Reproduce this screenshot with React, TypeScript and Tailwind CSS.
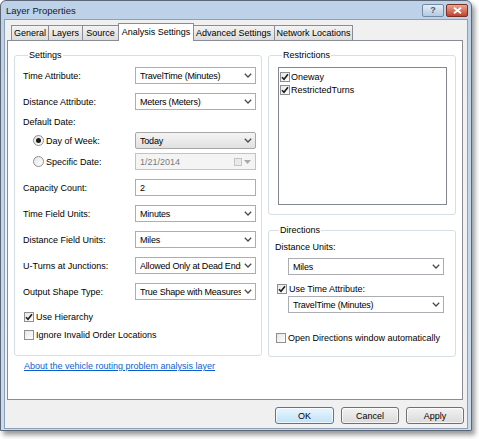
import React from 'react'

const font = "font-['Liberation_Sans',Arial,sans-serif]"

function Chevron({ color = '#4a4a4a' }: { color?: string }) {
  return (
    <svg width="8" height="5" viewBox="0 0 8 5" className="shrink-0">
      <path d="M0.8 0.8 L4 4 L7.2 0.8" fill="none" stroke={color} strokeWidth="1.3" />
    </svg>
  )
}

function Combo({ value, className = '', gray = false }: { value: string; className?: string; gray?: boolean }) {
  return (
    <div
      className={`flex h-[17px] items-center overflow-hidden border ${
        gray
          ? 'rounded-[2px] border-[#a7a7a7] bg-gradient-to-b from-[#f4f4f4] to-[#e1e1e1]'
          : 'border-[#abadb3] bg-white'
      } ${className}`}
    >
      <span className="flex-1 overflow-hidden whitespace-nowrap pl-[4px] tracking-[-0.2px] text-black">{value}</span>
      <span className="flex w-[14px] shrink-0 justify-center">
        <Chevron />
      </span>
    </div>
  )
}

function Check({ checked }: { checked?: boolean }) {
  return (
    <span className="flex h-[10px] w-[10px] shrink-0 items-center justify-center border border-[#8e8f8f] bg-gradient-to-br from-[#e6e6e6] to-white">
      {checked && (
        <svg width="8" height="8" viewBox="0 0 8 8">
          <path d="M1 4.2 L3 6.3 L7 1.2" fill="none" stroke="#1d1d1d" strokeWidth="1.6" />
        </svg>
      )}
    </span>
  )
}

function Radio({ checked }: { checked?: boolean }) {
  return (
    <span className="flex h-[11px] w-[11px] shrink-0 items-center justify-center rounded-full border border-[#8e8f8f] bg-gradient-to-br from-[#e4e4e4] to-white">
      {checked && <span className="h-[5px] w-[5px] rounded-full bg-[#1a1a1a]" />}
    </span>
  )
}

function Row({ label, children, mt = 'mt-[9px]' }: { label: React.ReactNode; children: React.ReactNode; mt?: string }) {
  return (
    <div className={`flex h-[17px] items-center ${mt}`}>
      <div className="w-[112px] shrink-0">{label}</div>
      {children}
    </div>
  )
}

const tabs = [
  { name: 'General', w: 'w-[38px]' },
  { name: 'Layers', w: 'w-[34px]' },
  { name: 'Source', w: 'w-[36px]' },
  { name: 'Analysis Settings', w: 'w-[76px]', active: true },
  { name: 'Advanced Settings', w: 'w-[82px]' },
  { name: 'Network Locations', w: 'w-[78px]' },
]

export default function App() {
  return (
    <div className={`h-[439px] w-[479px] bg-white text-[9px] leading-[12px] text-black ${font}`}>
      <div className="flex h-[431px] w-[472px] flex-col rounded-t-[6px] border border-[#5b6777] bg-gradient-to-b from-[#bdd1e9] to-[#cadbee] shadow-[3px_4px_5px_rgba(0,0,0,0.4)]">
        {/* Title bar */}
        <div className="flex h-[18px] items-start justify-between pl-[5px] pr-[3px] pt-[3px]">
          <span className="mt-[1px] text-[9.5px] text-[#1b1b1b]">Layer Properties</span>
          <div className="flex gap-[2px]">
            <div className="flex h-[13px] w-[22px] items-center justify-center rounded-[2px] border border-[#7489a4] bg-gradient-to-b from-[#e4edf7] to-[#b4c9e3] text-[9px] font-bold leading-none text-[#4b5b70]">
              ?
            </div>
            <div className="flex h-[13px] w-[22px] items-center justify-center rounded-[2px] border border-[#7d2f22] bg-gradient-to-b from-[#e9a593] to-[#c2402a]">
              <svg width="9" height="7" viewBox="0 0 9 7">
                <path d="M1 0.8 L8 6.2 M8 0.8 L1 6.2" stroke="white" strokeWidth="1.8" />
              </svg>
            </div>
          </div>
        </div>

        {/* Client area */}
        <div className="mx-[3px] mb-[1px] flex flex-1 flex-col border border-[#8ea0b7] bg-[#f0f0f0]">
          {/* Tabs */}
          <div className="ml-[6px] mt-[3px] flex h-[17px] items-end">
            {tabs.map((t) =>
              t.active ? (
                <div
                  key={t.name}
                  className={`relative z-10 -mb-[1px] -mx-[1px] flex h-[18px] items-start justify-center border border-b-0 border-[#898c95] bg-white pt-[2px] ${t.w}`}
                >
                  {t.name}
                </div>
              ) : (
                <div
                  key={t.name}
                  className={`flex h-[15px] items-center justify-center border border-b-0 border-l-0 border-[#898c95] bg-gradient-to-b from-[#f3f3f3] to-[#dcdcdc] first:border-l ${t.w}`}
                >
                  {t.name}
                </div>
              ),
            )}
          </div>

          {/* Tab panel */}
          <div className="ml-[2px] flex h-[360px] w-[456px] flex-col border border-[#898c95] bg-white">
            <div className="mt-[8px] flex">
              {/* Settings */}
              <fieldset className="ml-[6px] h-[307px] w-[248px] rounded-[3px] border border-[#d5dfe5] pl-[8px] pr-[5px]">
                <legend className="ml-[5px] px-[1px] leading-[12px]">Settings</legend>
                <Row label="Time Attribute:" mt="mt-[6px]">
                  <Combo value="TravelTime (Minutes)" className="w-[121px]" />
                </Row>
                <Row label="Distance Attribute:">
                  <Combo value="Meters (Meters)" className="w-[121px]" />
                </Row>
                <div className="mt-[5px] flex h-[14px] items-center">Default Date:</div>
                <Row
                  mt="mt-[3px]"
                  label={
                    <span className="flex items-center gap-[2px] pl-[10px]">
                      <Radio checked />
                      Day of Week:
                    </span>
                  }
                >
                  <Combo value="Today" gray className="w-[121px]" />
                </Row>
                <Row
                  mt="mt-[4px]"
                  label={
                    <span className="flex items-center gap-[2px] pl-[10px]">
                      <Radio />
                      Specific Date:
                    </span>
                  }
                >
                  <div className="flex h-[17px] w-[121px] items-center border border-[#c0c4c8] bg-[#f4f4f4] text-[#7a7a7a]">
                    <span className="flex-1 pl-[4px]">1/21/2014</span>
                    <span className="mr-[2px] h-[8px] w-[8px] border border-[#c4c4c4] bg-[#e9e9e9]" />
                    <svg width="7" height="4" viewBox="0 0 7 4" className="mr-[4px]">
                      <path d="M0 0 L7 0 L3.5 4 Z" fill="#a8a8a8" />
                    </svg>
                  </div>
                </Row>
                <Row label="Capacity Count:">
                  <div className="flex h-[17px] w-[121px] items-center border border-[#abadb3] bg-white pl-[4px]">2</div>
                </Row>
                <Row label="Time Field Units:">
                  <Combo value="Minutes" className="w-[121px]" />
                </Row>
                <Row label="Distance Field Units:">
                  <Combo value="Miles" className="w-[121px]" />
                </Row>
                <Row label="U-Turns at Junctions:">
                  <Combo value="Allowed Only at Dead Ends" className="w-[121px]" />
                </Row>
                <Row label="Output Shape Type:">
                  <Combo value="True Shape with Measures" className="w-[121px]" />
                </Row>
                <div className="mt-[10px] flex h-[14px] items-center gap-[2px] pl-[1px]">
                  <Check checked />
                  Use Hierarchy
                </div>
                <div className="mt-[4px] flex h-[14px] items-center gap-[2px] pl-[1px]">
                  <Check />
                  Ignore Invalid Order Locations
                </div>
              </fieldset>

              <div className="ml-[6px] flex w-[188px] flex-col">
                {/* Restrictions */}
                <fieldset className="h-[166px] rounded-[3px] border border-[#d5dfe5] pl-[9px] pr-[8px]">
                  <legend className="ml-[4px] px-[1px] leading-[12px]">Restrictions</legend>
                  <div className="mt-[6px] h-[138px] border border-[#828790] bg-white pl-[1px] pt-[2px]">
                    <div className="flex h-[13px] items-center gap-[1px]">
                      <Check checked />
                      Oneway
                    </div>
                    <div className="flex h-[13px] items-center gap-[1px]">
                      <Check checked />
                      RestrictedTurns
                    </div>
                  </div>
                </fieldset>

                {/* Directions */}
                <fieldset className="mt-[9px] h-[133px] rounded-[3px] border border-[#d5dfe5] pl-[6px]">
                  <legend className="ml-[4px] px-[1px] leading-[12px]">Directions</legend>
                  <div className="mt-[5px] flex h-[12px] items-center">Distance Units:</div>
                  <Combo value="Miles" className="ml-[13px] mt-[5px] w-[156px]" />
                  <div className="mt-[7px] flex h-[14px] items-center gap-[2px] pl-[2px]">
                    <Check checked />
                    Use Time Attribute:
                  </div>
                  <Combo value="TravelTime (Minutes)" className="ml-[13px] mt-0 w-[156px]" />
                  <div className="mt-[18px] flex h-[14px] items-center gap-[2px] pl-[1px]">
                    <Check />
                    Open Directions window automatically
                  </div>
                </fieldset>
              </div>
            </div>

            <a href="#" className="ml-[16px] mt-[3px] w-fit text-[#0a5fd0] underline">
              About the vehicle routing problem analysis layer
            </a>
          </div>

          {/* Buttons */}
          <div className="mr-[3px] mt-[7px] flex justify-end gap-[7px]">
            <button className="h-[17px] w-[59px] rounded-[3px] border border-[#3c7fb1] bg-gradient-to-b from-[#eaf6fd] to-[#bfe2f6] shadow-[inset_0_0_0_1px_rgba(255,255,255,0.7)]">
              OK
            </button>
            <button className="h-[17px] w-[58px] rounded-[3px] border border-[#707070] bg-gradient-to-b from-[#f2f2f2] to-[#dadada] shadow-[inset_0_0_0_1px_rgba(255,255,255,0.7)]">
              Cancel
            </button>
            <button className="h-[17px] w-[58px] rounded-[3px] border border-[#707070] bg-gradient-to-b from-[#f2f2f2] to-[#dadada] shadow-[inset_0_0_0_1px_rgba(255,255,255,0.7)]">
              Apply
            </button>
          </div>
        </div>
      </div>
    </div>
  )
}
